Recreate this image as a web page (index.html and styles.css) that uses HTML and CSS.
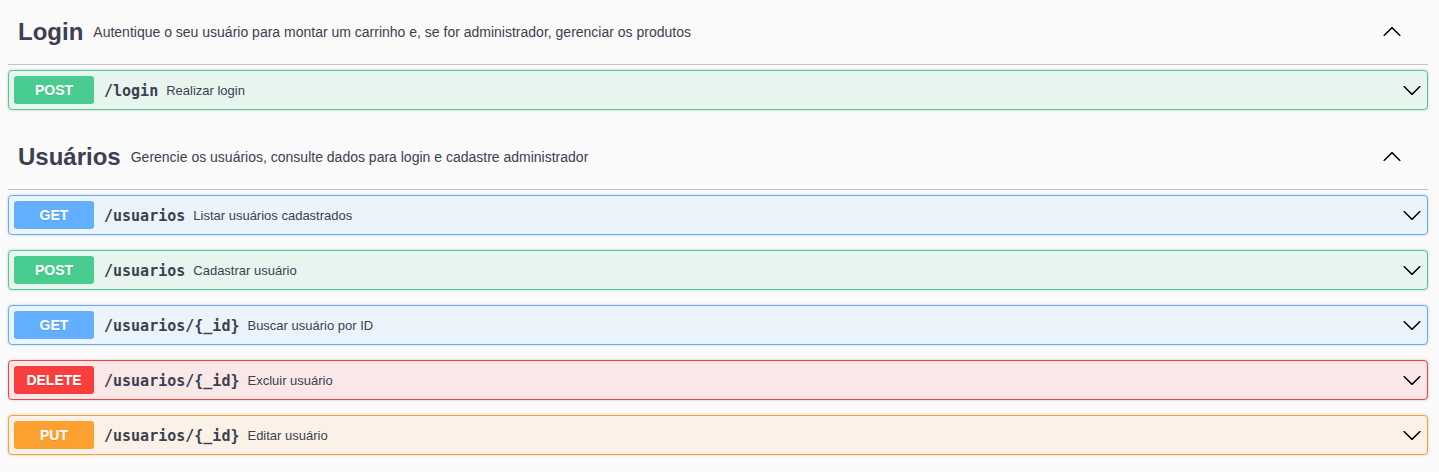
FILE: index.html
```
<!DOCTYPE html>
<html lang="pt-BR">
<head>
<meta charset="utf-8">
<title>API</title>
<link rel="stylesheet" href="styles.css">
</head>
<body>
<svg class="sprite" aria-hidden="true">
  <symbol id="chevron-down" viewBox="0 0 20 20">
    <path d="M17.418 6.109c.272-.268.709-.268.979 0s.271.701 0 .969l-7.908 7.83c-.27.268-.707.268-.979 0l-7.908-7.83c-.27-.268-.27-.701 0-.969.271-.268.709-.268.979 0L10 13.25l7.418-7.141z"/>
  </symbol>
  <symbol id="chevron-up" viewBox="0 0 20 20">
    <path d="M17.418 13.908c.272.27.709.27.979 0s.271-.701 0-.969l-7.908-7.83c-.27-.268-.707-.268-.979 0l-7.908 7.83c-.27.268-.27.701 0 .969.271.268.709.268.979 0L10 6.767l7.418 7.141z"/>
  </symbol>
</svg>
<main class="api">
  <section class="tag">
    <header class="tag-header">
      <h3 class="tag-name">Login</h3>
      <p class="tag-description">Autentique o seu usuário para montar um carrinho e, se for administrador, gerenciar os produtos</p>
      <button class="toggle" type="button" aria-expanded="true" aria-label="Recolher Login"><svg class="icon"><use href="#chevron-up"/></svg></button>
    </header>
    <div class="operations">
      <button class="operation post" type="button" aria-expanded="false">
        <span class="method">POST</span>
        <span class="path">/login</span>
        <span class="summary">Realizar login</span>
        <svg class="icon"><use href="#chevron-down"/></svg>
      </button>
    </div>
  </section>
  <section class="tag">
    <header class="tag-header">
      <h3 class="tag-name">Usuários</h3>
      <p class="tag-description">Gerencie os usuários, consulte dados para login e cadastre administrador</p>
      <button class="toggle" type="button" aria-expanded="true" aria-label="Recolher Usuários"><svg class="icon"><use href="#chevron-up"/></svg></button>
    </header>
    <div class="operations">
      <button class="operation get" type="button" aria-expanded="false">
        <span class="method">GET</span>
        <span class="path">/usuarios</span>
        <span class="summary">Listar usuários cadastrados</span>
        <svg class="icon"><use href="#chevron-down"/></svg>
      </button>
      <button class="operation post" type="button" aria-expanded="false">
        <span class="method">POST</span>
        <span class="path">/usuarios</span>
        <span class="summary">Cadastrar usuário</span>
        <svg class="icon"><use href="#chevron-down"/></svg>
      </button>
      <button class="operation get" type="button" aria-expanded="false">
        <span class="method">GET</span>
        <span class="path">/usuarios/{_id}</span>
        <span class="summary">Buscar usuário por ID</span>
        <svg class="icon"><use href="#chevron-down"/></svg>
      </button>
      <button class="operation delete" type="button" aria-expanded="false">
        <span class="method">DELETE</span>
        <span class="path">/usuarios/{_id}</span>
        <span class="summary">Excluir usuário</span>
        <svg class="icon"><use href="#chevron-down"/></svg>
      </button>
      <button class="operation put" type="button" aria-expanded="false">
        <span class="method">PUT</span>
        <span class="path">/usuarios/{_id}</span>
        <span class="summary">Editar usuário</span>
        <svg class="icon"><use href="#chevron-down"/></svg>
      </button>
    </div>
  </section>
</main>
</body>
</html>
```
FILE: styles.css
```
* {
  box-sizing: border-box;
}

body {
  margin: 0;
  background: #fafafa;
  color: #3b4151;
  font-family: "Liberation Sans", Arial, sans-serif;
}

.sprite {
  display: none;
}

.api {
  display: flex;
  flex-direction: column;
  gap: 15px;
  padding: 0 11px 15px 8px;
}

.tag-header {
  display: flex;
  align-items: center;
  gap: 10px;
  padding: 16px 26px 16px 10px;
  border-bottom: 1px solid rgba(59, 65, 81, 0.3);
}

.tag-name {
  margin: 0;
  font-size: 24px;
  line-height: 32px;
}

.tag-description {
  flex: 1;
  margin: 0;
  font-size: 14px;
  line-height: 20px;
}

.toggle {
  display: flex;
  padding: 0;
  border: 0;
  background: none;
  cursor: pointer;
}

.icon {
  display: block;
  flex: none;
  width: 20px;
  height: 20px;
  fill: #000;
}

.operations {
  display: flex;
  flex-direction: column;
  gap: 15px;
  padding-top: 5px;
}

.operation {
  display: flex;
  align-items: center;
  width: 100%;
  padding: 5px;
  border: 1px solid;
  border-radius: 4px;
  box-shadow: 0 0 3px rgba(0, 0, 0, 0.19);
  color: #3b4151;
  font-family: inherit;
  text-align: left;
  cursor: pointer;
}

.method {
  width: 80px;
  margin-right: 10px;
  border-radius: 3px;
  color: #fff;
  font-size: 14px;
  font-weight: 700;
  line-height: 28px;
  text-align: center;
  text-shadow: 0 1px 0 rgba(0, 0, 0, 0.1);
}

.path {
  margin-right: 8px;
  padding-top: 2px;
  font-family: "DejaVu Sans Mono", monospace;
  font-size: 15px;
  font-weight: 700;
  line-height: 20px;
}

.summary {
  flex: 1;
  padding-top: 2px;
  font-size: 13px;
  line-height: 20px;
}

.post {
  border-color: #49cc90;
  background: #e8f5ef;
}

.post .method {
  background: #49cc90;
}

.get {
  border-color: #61affe;
  background: #ebf3fb;
}

.get .method {
  background: #61affe;
}

.delete {
  border-color: #f93e3e;
  background: #fae7e7;
}

.delete .method {
  background: #f93e3e;
}

.put {
  border-color: #fca130;
  background: #fbf1e6;
}

.put .method {
  background: #fca130;
}
```
